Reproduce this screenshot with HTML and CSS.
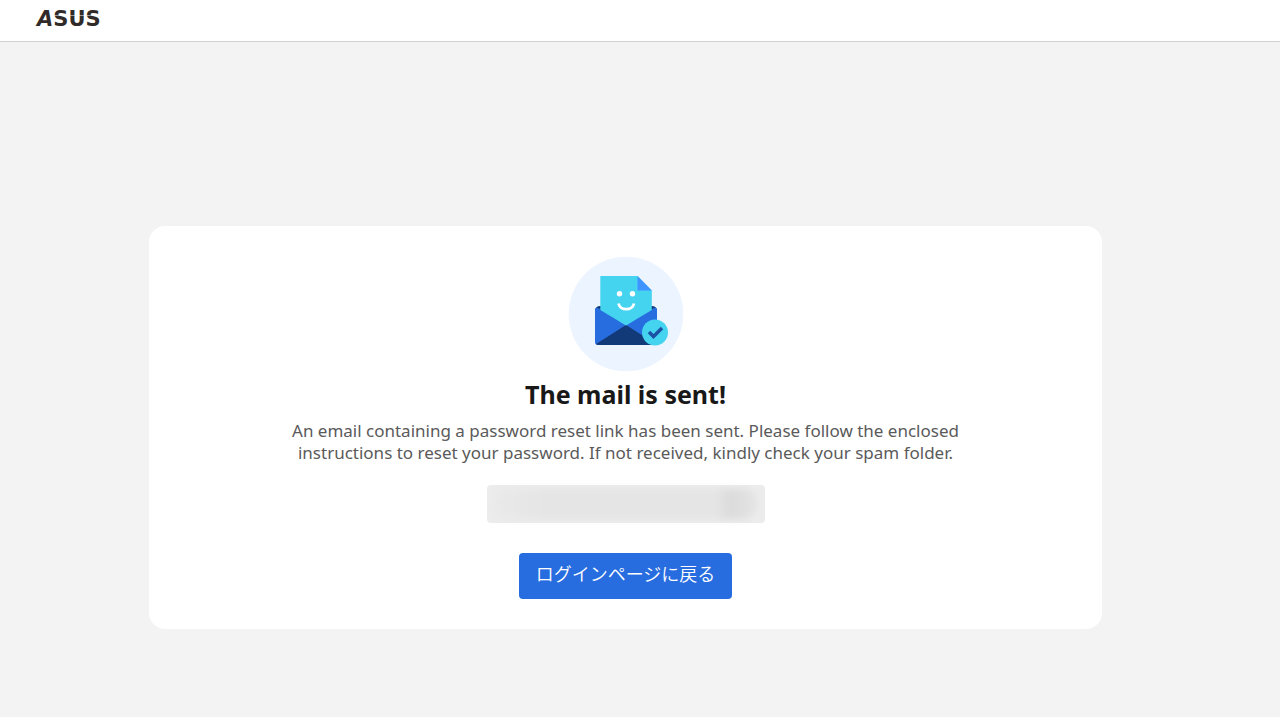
FILE: index.html
```html
<!DOCTYPE html>
<html lang="ja">
<head>
  <meta charset="UTF-8" />
  <meta name="viewport" content="width=device-width, initial-scale=1" />
  <title>ASUS</title>
  <link rel="stylesheet" href="styles.css">
</head>
<body>

  <header class="header">
    <a class="logo" href="#" aria-label="ASUS">
      <svg width="72" height="28" viewBox="0 0 72 28">
        <text class="logo-text" x="2" y="20"><tspan class="logo-slant">A</tspan>SUS</text>
        <path class="logo-cut" d="M17 9.500H70" />
      </svg>
    </a>
  </header>

  <main class="main">
    <section class="card">
      <svg class="mail-icon" width="116" height="116" viewBox="0 0 116 116" aria-hidden="true">
        <circle cx="58" cy="58" r="57.3" fill="#ebf4ff" />
        <!-- envelope -->
        <path d="M27 54Q28 50 32 50H84Q88 50 89 54V65H27Z" fill="#133a78" />
        <path d="M27 54Q27 51 30 52L58 69L86 52Q89 51 89 54V86Q89 89 86 89H30Q27 89 27 86Z" fill="#276ddf" />
        <path d="M28 88L58 69L88 88Q87 89 85 89H31Q29 89 28 88Z" fill="#133a78" />
        <!-- letter -->
        <path d="M32.300 20H69.500L83.800 34.500V54L58 69.500L32.300 54Z" fill="#45d4ef" />
        <path d="M69.500 20L83.800 34.500H69.500Z" fill="#4094ff" />
        <circle cx="51.500" cy="37.700" r="2.700" fill="#fff" />
        <circle cx="64.500" cy="37.700" r="2.700" fill="#fff" />
        <path d="M50.500 47.500C52 55 64.500 55 66 47.500" fill="none" stroke="#fff" stroke-width="2.800" />
        <!-- check badge -->
        <circle cx="87" cy="76.500" r="13" fill="#45d4ef" />
        <path d="M81 76L85.500 80.500L94 72" fill="none" stroke="#1c50a5" stroke-width="3.500" />
      </svg>

      <h1 class="title">The mail is sent!</h1>
      <p class="message">An email containing a password reset link has been sent. Please follow the enclosed instructions to reset your password. If not received, kindly check your spam folder.</p>

      <div class="email-box"><span class="email-mask"></span></div>

      <button class="back-btn" type="button">ログインページに戻る</button>
    </section>
  </main>

</body>
</html>
```
FILE: styles.css
```css
* {
  box-sizing: border-box;
}

body {
  margin: 0;
  min-height: 100vh;
  padding-bottom: 3px;
  display: flex;
  flex-direction: column;
  background: #fff;
  font-family: "Noto Sans", "Noto Sans CJK JP", sans-serif;
}

.header {
  height: 42px;
  padding: 6px 35px;
  border-bottom: 1px solid #d0d0d0;
}

.logo {
  display: block;
  width: 72px;
  height: 28px;
}

.logo svg {
  display: block;
}

.logo-text {
  font-family: "DejaVu Sans", sans-serif;
  font-size: 21px;
  font-weight: bold;
  fill: #302b29;
}

.logo-slant {
  font-style: italic;
}

.logo-cut {
  stroke: #fff;
  stroke-width: 1;
  opacity: 0.5;
}

.main {
  flex: 1;
  padding: 184px 178px 88px 149px;
  background: #f3f3f3;
}

.card {
  display: flex;
  flex-direction: column;
  align-items: center;
  padding: 30px;
  background: #fff;
  border-radius: 16px;
  text-align: center;
}

.mail-icon {
  display: block;
}

.title {
  margin: 5px 0 9px;
  color: #181818;
  font-size: 25px;
  line-height: 34px;
}

.message {
  max-width: 680px;
  margin: 0 0 21px;
  color: #5a5a5a;
  font-size: 17px;
  line-height: 22px;
}

.email-box {
  width: 278px;
  height: 38px;
  margin-bottom: 30px;
  padding: 4px 8px;
  background: #ececec;
  border-radius: 4px;
}

/* hidden address */
.email-mask {
  display: block;
  height: 30px;
  border-radius: 14px;
  background: linear-gradient(90deg, #e9e9e9, #e5e5e5 20%, #e5e5e5 84%, #dbdbdb 90%, #e4e4e4);
  filter: blur(3px);
}

.back-btn {
  height: 46px;
  padding: 0 17px 6px;
  border: none;
  border-radius: 4px;
  background: #276ddf;
  color: #fff;
  font-family: "Noto Sans CJK JP", sans-serif;
  font-size: 18px;
  font-weight: 350;
  cursor: pointer;
}

.back-btn:hover {
  background: #1f5cc0;
}
```
